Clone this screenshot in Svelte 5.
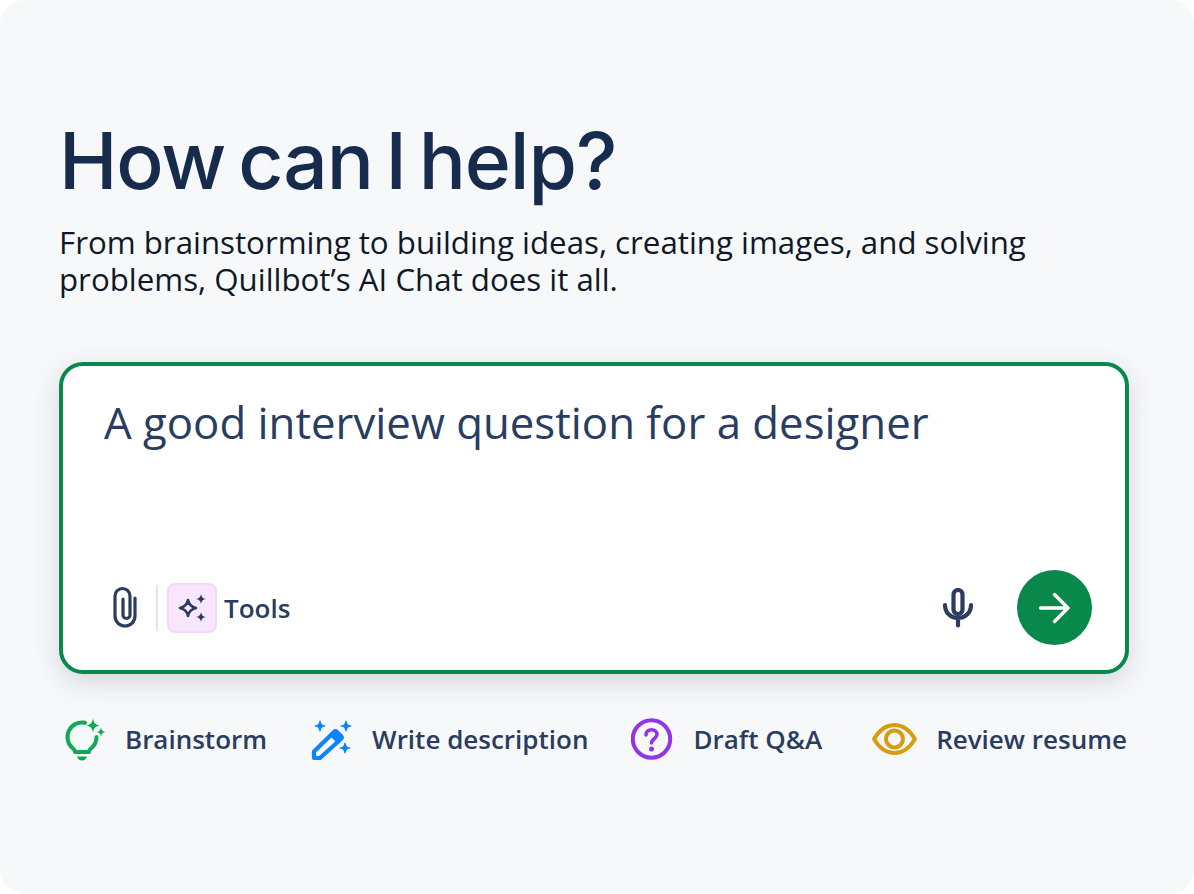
<script lang="ts">
  let text = 'A good interview question for a designer';
</script>

<div class="page">
  <h1>How can I help?</h1>
  <p class="sub">From brainstorming to building ideas, creating images, and solving problems, Quillbot’s AI Chat does it all.</p>

  <div class="box">
    <div class="prompt">{text}</div>
    <div class="toolbar">
      <svg class="clip" width="32" height="48" viewBox="0 0 32 48" fill="none" stroke="#2a3c5f" stroke-width="3.200" stroke-linecap="round">
        <path d="M27 14V32a10 10 0 0 1-20 0V12a7.500 7.500 0 0 1 15 0V31a3.500 3.500 0 0 1-7 0V15" />
      </svg>
      <span class="sep"></span>
      <span class="tools-icon">
        <svg width="30" height="30" viewBox="0 0 30 30" fill="none">
          <path d="M11 7c1 4.900 3.100 7 8 8-4.900 1-7 3.100-8 8-1-4.900-3.100-7-8-8 4.900-1 7-3.100 8-8z" stroke="#2a3c5f" stroke-width="2.600" stroke-linejoin="round" />
          <path d="M24 1c.6 3.300 1.700 4.400 5 5-3.300.6-4.400 1.700-5 5-.6-3.300-1.700-4.400-5-5 3.300-.6 4.400-1.700 5-5zM24 19c.6 3.300 1.700 4.400 5 5-3.300.6-4.400 1.700-5 5-.6-3.300-1.700-4.400-5-5 3.300-.6 4.400-1.700 5-5z" fill="#2a3c5f" />
        </svg>
      </span>
      <span class="tools-label">Tools</span>
      <svg class="mic" width="32" height="40" viewBox="0 0 32 40" fill="none" stroke="#2a3c5f" stroke-width="4.200" stroke-linecap="round">
        <rect x="11.500" y="2" width="9" height="24" rx="4.500" />
        <path d="M3 17c0 7.500 5.500 13 13 13s13-5.500 13-13M16 30v7.500" />
      </svg>
      <button class="send" aria-label="Send">
        <svg width="36" height="36" viewBox="0 0 36 36" fill="none" stroke="#fff" stroke-width="3.400" stroke-linecap="round" stroke-linejoin="round">
          <path d="M3.500 18h27M17.500 4.500 31 18 17.500 31.500" />
        </svg>
      </button>
    </div>
  </div>

  <div class="chips">
    <div class="chip">
      <svg width="44" height="44" viewBox="0 0 44 44" fill="none" stroke="#0fa958" stroke-width="4" stroke-linecap="round" stroke-linejoin="round">
        <path d="M22 5.800A14.500 14.500 0 0 0 9 30.500c2 1.500 3 3 3 4.500h14c0-1.500 1-3 3-4.500A14.500 14.500 0 0 0 33.500 20" />
        <path d="M14 39.500h10c-1 3-3 4-5 4s-4-1-5-4z" fill="#0fa958" stroke="none" />
        <path d="M30 1.500c.9 4.600 2.400 6.100 7 7-4.600.9-6.100 2.400-7 7-.9-4.600-2.400-6.100-7-7 4.600-.9 6.100-2.400 7-7zM38 10.500c.6 2.900 1.500 3.800 4.500 4.500-3 .7-3.900 1.600-4.500 4.500-.6-2.900-1.500-3.800-4.500-4.500 3-.7 3.900-1.600 4.500-4.500z" fill="#0fa958" stroke="none" />
      </svg>
      <span>Brainstorm</span>
    </div>
    <div class="chip">
      <svg width="44" height="44" viewBox="0 0 44 44" fill="none">
        <path d="M4 34.500 24 15c1-1 2-1 3 0l4 4c1 1 1 2 0 3L10 41H4z" stroke="#0a84ff" stroke-width="4.200" stroke-linejoin="round" />
        <path d="M20 19 24 15c1-1 2-1 3 0l4 4c1 1 1 2 0 3l-4 4z" fill="#0a84ff" />
        <path d="M10 4c.7 3.500 1.500 4.300 5 5-3.500.7-4.300 1.500-5 5-.7-3.500-1.500-4.300-5-5 3.500-.7 4.300-1.500 5-5zM36 4c.7 3.500 1.500 4.300 5 5-3.500.7-4.300 1.500-5 5-.7-3.500-1.500-4.300-5-5 3.500-.7 4.300-1.500 5-5zM35 26c.7 3.500 1.500 4.300 5 5-3.500.7-4.300 1.500-5 5-.7-3.500-1.500-4.300-5-5 3.500-.7 4.300-1.500 5-5z" fill="#0a84ff" stroke="#0a84ff" stroke-width="1.200" stroke-linejoin="round" />
      </svg>
      <span>Write description</span>
    </div>
    <div class="chip">
      <svg width="44" height="44" viewBox="1.500 0 44 44" fill="none">
        <circle cx="22" cy="22" r="18.700" stroke="#9333ea" stroke-width="4" />
        <path d="M16.500 18c0-3.200 2.400-5.300 5.500-5.300s5.500 2.100 5.500 4.800c0 4.200-5.500 4.300-5.500 8.500" stroke="#9333ea" stroke-width="3.600" stroke-linecap="round" />
        <circle cx="22" cy="32" r="2.500" fill="#9333ea" />
      </svg>
      <span>Draft Q&amp;A</span>
    </div>
    <div class="chip last">
      <svg width="46" height="44" viewBox="1 0 46 44" fill="none" stroke="#d69e0e">
        <path d="M3 22C8 13.500 14.500 8 23.500 8S39 13.500 44 22c-5 8.500-11.500 14-20.500 14S8 30.500 3 22z" stroke-width="3.800" stroke-linejoin="round" />
        <circle cx="23.500" cy="22" r="8.500" stroke-width="4" />
      </svg>
      <span>Review resume</span>
    </div>
  </div>
</div>

<style>
  :global(body) { margin: 0; background: #fff; }
  .page {
    width: 1194px;
    height: 894px;
    box-sizing: border-box;
    padding: 113px 65px 0 59px;
    background: #f7f8fa;
    border-radius: 24px;
    font-family: "Open Sans", sans-serif;
  }
  h1 {
    margin: 0;
    font-family: Inter, sans-serif;
    font-size: 78.500px;
    line-height: 96px;
    font-weight: 525;
    letter-spacing: -1.100px;
    word-spacing: -7px;
    color: #172b4d;
  }
  .sub {
    margin: 15px 0 0;
    width: 1010px;
    font-size: 31.250px;
    line-height: 37px;
    color: #101828;
  }
  .box {
    margin-top: 64px;
    height: 312px;
    box-sizing: border-box;
    border: 4px solid #08884a;
    border-radius: 24px;
    background: #fff;
    box-shadow: 0 8px 26px rgba(23, 43, 77, 0.16);
    padding: 28px 33px 25px 41px;
    display: flex;
    flex-direction: column;
    justify-content: space-between;
  }
  .prompt {
    font-size: 43.750px;
    line-height: 56px;
    color: #2a3c5f;
  }
  .toolbar { display: flex; align-items: center; }
  .clip { margin-left: 4px; }
  .sep { width: 2px; height: 46px; background: #e2e4e8; margin-left: 16px; }
  .tools-icon {
    width: 50px;
    height: 50px;
    box-sizing: border-box;
    margin-left: 9px;
    border: 2px solid #efd9f5;
    border-radius: 8px;
    background: #f8e6fd;
    display: flex;
    align-items: center;
    justify-content: center;
  }
  .tools-label {
    margin-left: 7px;
    font-size: 26px;
    font-weight: 550;
    color: #2a3c5f;
  }
  .mic { margin-left: auto; }
  .send {
    width: 75px;
    height: 75px;
    margin-left: 43px;
    padding: 0;
    border: none;
    border-radius: 50%;
    background: #08884a;
    display: flex;
    align-items: center;
    justify-content: center;
  }
  .chips {
    margin-top: 43px;
    padding-left: 4px;
    display: flex;
    gap: 43px;
    align-items: center;
  }
  .chip {
    display: flex;
    align-items: center;
    gap: 18px;
    font-size: 26px;
    font-weight: 550;
    white-space: nowrap;
    color: #2a3c5f;
  }
  .chip.last { margin-left: 7px; }
</style>
